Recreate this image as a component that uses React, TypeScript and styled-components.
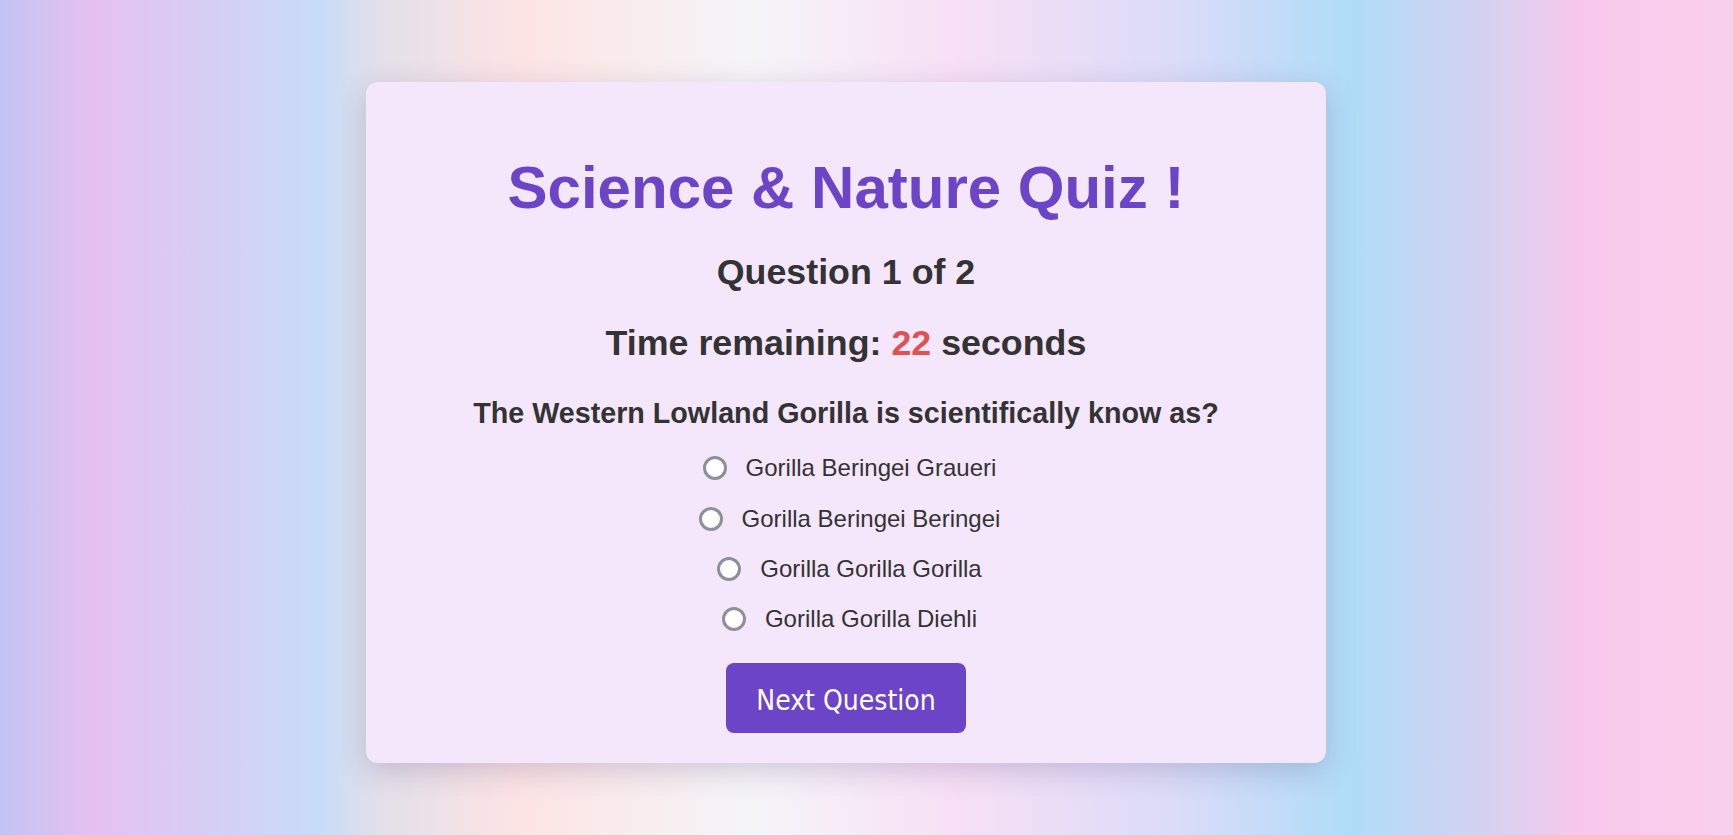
import styled, { createGlobalStyle } from 'styled-components'

const GlobalStyle = createGlobalStyle`
  html, body {
    margin: 0;
    padding: 0;
  }
  body {
    font-family: "Liberation Sans", Arial, sans-serif;
    color: #333;
    background: linear-gradient(
      to right,
      #c2c4f4 0%,
      #e6c0f0 5.4%,
      #c8dcf8 18.5%,
      #e4e0ea 22%,
      #fde4e4 30%,
      #f5f5f8 43.4%,
      #f8e0f6 55%,
      #dcdcf8 67.6%,
      #b0dcf8 78%,
      #dcd0f0 87%,
      #f8c8ec 91%,
      #f8d0ec 100%
    );
    min-height: 100vh;
  }
`

const options = [
  'Gorilla Beringei Graueri',
  'Gorilla Beringei Beringei',
  'Gorilla Gorilla Gorilla',
  'Gorilla Gorilla Diehli',
]

export default function App () {
  return (
    <>
      <GlobalStyle />
      <Page>
        <Card>
          <Title>Science &amp; Nature Quiz !</Title>
          <Subtitle>Question 1 of 2</Subtitle>
          <Subtitle $gap={30}>
            Time remaining: <Seconds>22</Seconds> seconds
          </Subtitle>
          <QuestionText>The Western Lowland Gorilla is scientifically know as?</QuestionText>
          <OptionList>
            {options.map(opt => (
              <Option key={opt}>
                <Radio type="radio" name="answer" value={opt} />
                <span>{opt}</span>
              </Option>
            ))}
          </OptionList>
          <NextButton type="button">Next Question</NextButton>
        </Card>
      </Page>
    </>
  )
}

const Page = styled.main`
  display: flex;
  justify-content: center;
  align-items: flex-start;
  padding: 82px 41px 0 0;
  min-height: 100vh;
  box-sizing: border-box;
`

const Card = styled.section`
  width: 960px;
  box-sizing: border-box;
  padding: 71px 0 30px;
  display: flex;
  flex-direction: column;
  align-items: center;
  background-color: #f5e7fb;
  border-radius: 12px;
  box-shadow: 0 8px 30px rgba(70, 50, 110, 0.22);
`

const Title = styled.h1`
  margin: 0;
  font-size: 60px;
  line-height: 1.15;
  font-weight: bold;
  color: #6c44c8;
`

const Subtitle = styled.h2<{ $gap?: number }>`
  margin: ${p => p.$gap ?? 30}px 0 0;
  font-size: 35.8px;
  line-height: 1.15;
  font-weight: bold;
  color: #333;
`

const Seconds = styled.span`
  color: #e05252;
`

const QuestionText = styled.h3`
  margin: 33px 0 0;
  font-size: 28.7px;
  line-height: 1.15;
  font-weight: bold;
  color: #333;
`

const OptionList = styled.div`
  margin-top: 24px;
  display: flex;
  flex-direction: column;
  align-items: center;
  gap: 22.8px;
`

const Option = styled.label`
  display: flex;
  align-items: center;
  gap: 19px;
  padding-left: 7px;
  font-size: 24px;
  line-height: 1.15;
  color: #333;
  cursor: pointer;
`

const Radio = styled.input`
  appearance: none;
  margin: 0;
  width: 24px;
  height: 24px;
  box-sizing: border-box;
  border: 3px solid #8f8f99;
  border-radius: 50%;
  background-color: #fff;
  cursor: pointer;

  &:checked {
    border-color: #6c44c8;
    background: radial-gradient(circle, #6c44c8 0 5px, #fff 6px);
  }
`

const NextButton = styled.button`
  margin-top: 30px;
  width: 240px;
  height: 70px;
  padding: 4px 0 0;
  border: none;
  border-radius: 8px;
  background-color: #6c44c8;
  color: #fff;
  font-family: "DejaVu Sans Condensed", "DejaVu Sans", sans-serif;
  font-stretch: condensed;
  font-size: 28px;
  cursor: pointer;
`
